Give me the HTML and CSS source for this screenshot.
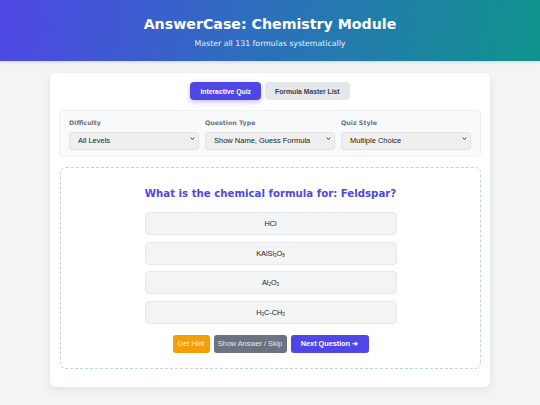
FILE: index.html
```html
<!DOCTYPE html>
<html>
<head>
<meta charset="utf-8">
<link rel="stylesheet" href="styles.css">
</head>
<body>
<header class="hero">
  <h1 class="hero-title">AnswerCase: Chemistry Module</h1>
  <p class="hero-sub">Master all 131 formulas systematically</p>
</header>
<main class="card">
  <div class="tabs">
    <button class="tab tab-active">Interactive Quiz</button>
    <button class="tab">Formula Master List</button>
  </div>
  <div class="settings">
    <label class="field">
      <span class="field-label">Difficulty</span>
      <span class="select-wrap">
        <select class="field-select"><option>All Levels</option></select>
        <svg class="chev" viewBox="0 0 8 5" width="5" height="3"><path d="M1 1l3 3 3-3" fill="none" stroke="#333" stroke-width="1.6"/></svg>
      </span>
    </label>
    <label class="field">
      <span class="field-label">Question Type</span>
      <span class="select-wrap">
        <select class="field-select"><option>Show Name, Guess Formula</option></select>
        <svg class="chev" viewBox="0 0 8 5" width="5" height="3"><path d="M1 1l3 3 3-3" fill="none" stroke="#333" stroke-width="1.6"/></svg>
      </span>
    </label>
    <label class="field">
      <span class="field-label">Quiz Style</span>
      <span class="select-wrap">
        <select class="field-select"><option>Multiple Choice</option></select>
        <svg class="chev" viewBox="0 0 8 5" width="5" height="3"><path d="M1 1l3 3 3-3" fill="none" stroke="#333" stroke-width="1.6"/></svg>
      </span>
    </label>
  </div>
  <section class="quiz">
    <h2 class="question">What is the chemical formula for: Feldspar?</h2>
    <div class="options">
      <button class="option">HCl</button>
      <button class="option">KAlSi<sub>3</sub>O<sub>8</sub></button>
      <button class="option">Al<sub>2</sub>O<sub>3</sub></button>
      <button class="option">H<sub>3</sub>C-CH<sub>3</sub></button>
    </div>
    <div class="actions">
      <button class="btn btn-hint">Get Hint</button>
      <button class="btn btn-skip">Show Answer / Skip</button>
      <button class="btn btn-next">Next Question ➔</button>
    </div>
  </section>
</main>
</body>
</html>
```
FILE: styles.css
```css
* { box-sizing: border-box; }
html, body { margin: 0; padding: 0; }
body {
  background: #f3f4f6;
  font-family: "Liberation Sans", Arial, sans-serif;
  width: 540px;
  height: 405px;
  overflow: hidden;
}
.hero {
  height: 61px;
  background: linear-gradient(100deg, #4f46e5 0%, #2f6dbf 45%, #0f938c 100%);
  color: #fff;
  text-align: center;
  padding-top: 15px;
  box-shadow: 0 1px 3px rgba(0,0,0,0.15);
}
.hero-title {
  margin: 0;
  font-family: "DejaVu Sans", Verdana, sans-serif;
  font-weight: bold;
  font-size: 14.2px;
  line-height: 18px;
}
.hero-sub {
  margin: 6px 0 0;
  font-family: "DejaVu Sans", Verdana, sans-serif;
  font-size: 7.8px;
  line-height: 10px;
  opacity: 0.9;
}
.card {
  margin: 12px 50px 0;
  height: 314px;
  background: #fff;
  border-radius: 6px;
  box-shadow: 0 3px 8px rgba(0,0,0,0.08);
  padding: 9px 9px 0;
}
.tabs {
  display: flex;
  justify-content: center;
  gap: 4px;
}
.tab {
  font-family: "Liberation Sans", Arial, sans-serif;
  font-weight: bold;
  font-size: 6.8px;
  height: 18px;
  padding: 0 10px;
  border: none;
  border-radius: 4px;
  background: #e5e7eb;
  color: #374151;
}
.tab-active {
  background: #4f46e5;
  color: #fff;
  box-shadow: 0 2px 5px rgba(79,70,229,0.35);
}
.settings {
  margin-top: 10px;
  height: 47px;
  background: #f9fafb;
  border: 1px solid #eef0f3;
  border-radius: 4px;
  display: flex;
  gap: 6px;
  padding: 8px 9px 0;
}
.field {
  flex: 1;
  display: flex;
  flex-direction: column;
  gap: 2px;
}
.field-label {
  font-family: "DejaVu Sans", Verdana, sans-serif;
  font-weight: bold;
  font-size: 6.3px;
  color: #6b7280;
  line-height: 8px;
}
.select-wrap {
  position: relative;
  display: block;
}
.field-select {
  width: 100%;
  height: 18px;
  appearance: none;
  -webkit-appearance: none;
  font-family: "Liberation Sans", Arial, sans-serif;
  font-size: 7.5px;
  color: #222;
  background: #efefef;
  border: 1px solid #e3e3e3;
  border-radius: 3px;
  padding: 0 8px;
}
.chev {
  position: absolute;
  right: 4px;
  top: 8px;
  pointer-events: none;
}
.quiz {
  margin: 10px 0 0 1px;
  height: 202px;
  border: 1.5px dashed #bfd3e8;
  border-radius: 6px;
  padding-top: 19px;
  display: flex;
  flex-direction: column;
  align-items: center;
}
.question {
  margin: 0;
  font-family: "DejaVu Sans", Verdana, sans-serif;
  font-weight: bold;
  font-size: 10.2px;
  line-height: 14px;
  color: #4f46e5;
}
.options {
  margin-top: 11px;
  width: 252px;
  display: flex;
  flex-direction: column;
  gap: 6.5px;
}
.option {
  height: 23px;
  background: #f3f4f6;
  border: 1px solid #e5e7eb;
  border-radius: 4px;
  font-family: "Liberation Sans", Arial, sans-serif;
  font-size: 7.3px;
  color: #222;
}
.option sub { font-size: 4.5px; vertical-align: -1px; }
.actions {
  margin-top: 11px;
  display: flex;
  gap: 4px;
}
.btn {
  height: 18px;
  border: none;
  border-radius: 3px;
  font-family: "Liberation Sans", Arial, sans-serif;
  font-size: 7.3px;
  color: #fff;
  padding: 0;
}
.btn-hint { background: #f59e0b; width: 37px; color: #fef3c7; }
.btn-skip { background: #6b7280; width: 73px; color: #e5e7eb; }
.btn-next { background: #4f46e5; font-weight: bold; width: 78px; }
```
